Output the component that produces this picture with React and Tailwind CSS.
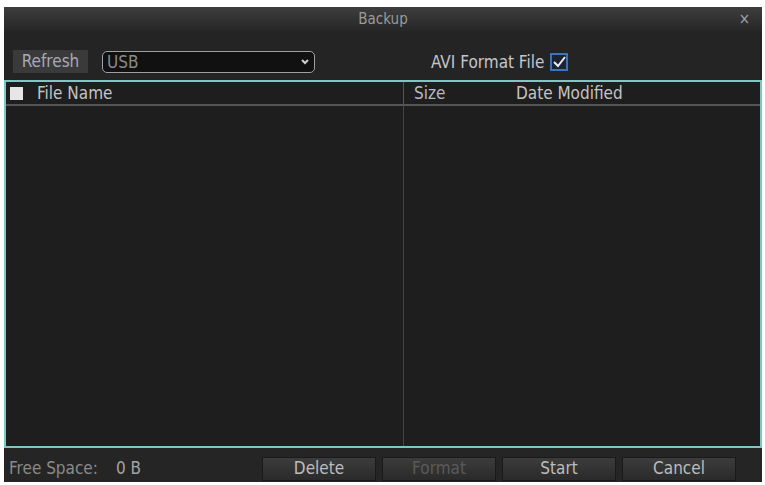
import React, { useState } from 'react';

const font = { fontFamily: '"Liberation Sans Narrow", "DejaVu Sans Condensed", "Liberation Sans", sans-serif' };

const BottomButton = ({ label, disabled }) => (
  <button
    className={`w-[114px] h-[24px] text-[17px] leading-none bg-gradient-to-b from-[#3c3c3c] to-[#2a2a2a] border border-[#1a1a1a] ${
      disabled ? 'text-[#5a5a5a]' : 'text-[#bdbdbd]'
    }`}
  >
    {label}
  </button>
);

const App = () => {
  const [avi, setAvi] = useState(true);
  const [files] = useState([]);

  return (
    <div className="w-[765px] h-[485px] bg-white pt-[7px] pl-[4px] pr-[3px] pb-[3px]" style={font}>
      <div className="flex flex-col h-full bg-[#242424]">
        {/* title bar */}
        <div className="relative h-[24px] flex items-center justify-center bg-gradient-to-b from-[#3e3e3e] to-[#262626]">
          <span className="text-[15px] text-[#9a9a9a] font-light">Backup</span>
          <span className="absolute right-[12px] top-[1px] text-[15px] text-[#a0a0a0]">×</span>
        </div>

        {/* toolbar */}
        <div className="h-[49px] flex items-end px-[9px] pb-[7px]">
          <button className="w-[75px] h-[23px] bg-[#3a3a3a] text-[#a8a8b8] text-[17px] leading-none font-light">Refresh</button>
          <div className="ml-[14px] w-[213px] h-[22px] flex items-center justify-between rounded-[5px] border border-[#a0a0a0] bg-[#111] px-[4px]">
            <span className="text-[17px] leading-none text-[#8a8a8a] font-light">USB</span>
            <svg width="10" height="8" viewBox="0 0 10 8">
              <path d="M2 2 L5 5 L8 2" stroke="#d0d0d0" strokeWidth="2" fill="none" />
            </svg>
          </div>
          <div className="ml-[116px] mb-[2px] flex items-center gap-[6px]">
            <span className="text-[17px] text-[#c4c4cc] leading-none font-light">AVI Format File</span>
            <button
              onClick={() => setAvi(!avi)}
              className="w-[18px] h-[18px] border-2 border-[#3f73b8] bg-[#1d2430] flex items-center justify-center"
            >
              {avi && (
                <svg width="14" height="14" viewBox="0 0 14 14">
                  <path d="M2 7 L6 11 L13 2" stroke="#e8ecf4" strokeWidth="2" fill="none" />
                </svg>
              )}
            </button>
          </div>
        </div>

        {/* file table */}
        <div className="flex-1 flex flex-col border-2 border-[#7ec8c4] bg-[#1e1e1e]">
          <div className="h-[24px] flex items-center border-b-2 border-[#555]">
            <div className="w-[398px] h-full flex items-center border-r border-[#555]">
              <span className="ml-[4px] w-[13px] h-[13px] bg-[#e6e6e6]" />
              <span className="ml-[14px] text-[17px] leading-none text-[#c4c4c4] font-light">File Name</span>
            </div>
            <span className="ml-[10px] w-[102px] text-[17px] leading-none text-[#b8b8c4] font-light">Size</span>
            <span className="text-[17px] leading-none text-[#c4c4c4] font-light">Date Modified</span>
          </div>
          <div className="flex-1 flex">
            <div className="w-[398px] border-r border-[#444]">
              {files.map((f) => (
                <div key={f.name}>{f.name}</div>
              ))}
            </div>
            <div className="flex-1" />
          </div>
        </div>

        {/* bottom bar */}
        <div className="h-[34px] flex items-center pl-[5px] pt-[7px] bg-[#252525]">
          <span className="text-[17px] leading-none text-[#8a8a8a] font-light">Free Space:</span>
          <span className="ml-[18px] text-[17px] leading-none text-[#a4a4a4] font-light">0 B</span>
          <div className="ml-auto mr-[26px] flex gap-[6px]">
            <BottomButton label="Delete" />
            <BottomButton label="Format" disabled />
            <BottomButton label="Start" />
            <BottomButton label="Cancel" />
          </div>
        </div>
      </div>
    </div>
  );
};

export default App;
